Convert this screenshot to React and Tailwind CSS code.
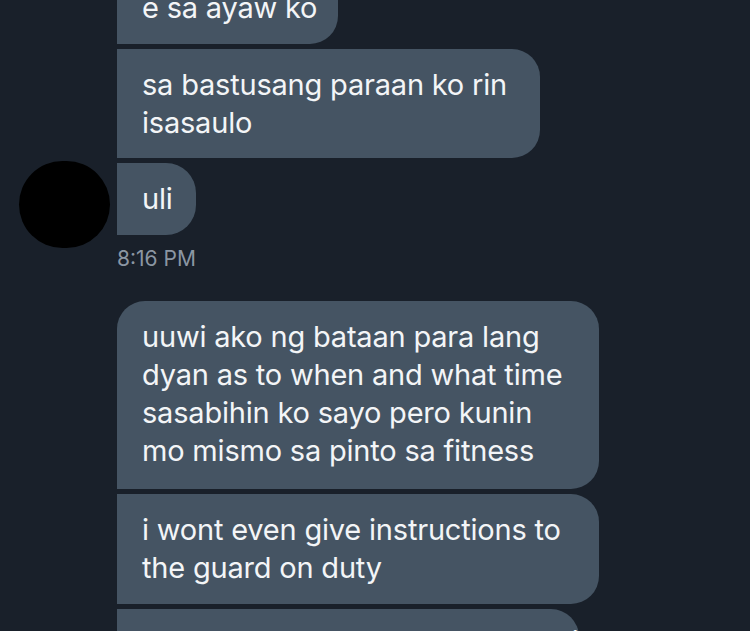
import React from "react";

const font = { fontFamily: '"Inter", "Liberation Sans", sans-serif' };

function Bubble({ className = "", children }) {
  return (
    <div
      className={`bg-[#455463] text-[#f3f5f7] text-[29px] leading-[38px] tracking-[-0.2px] px-[25px] py-[17px] whitespace-nowrap ${className}`}
    >
      {children}
    </div>
  );
}

export default function App() {
  return (
    <div
      className="w-[750px] h-[631px] overflow-hidden bg-[#19202a]"
      style={font}
    >
      <div className="flex">
        <div className="w-[117px] shrink-0 flex items-end justify-start">
          <div className="w-[91px] h-[87px] rounded-full bg-black ml-[19px] mb-[23px]" />
        </div>
        <div className="flex flex-col gap-[5px] mt-[-28px]">
          <Bubble className="w-[221px] h-[72px] rounded-r-[28px]">e sa ayaw ko</Bubble>
          <Bubble className="w-[423px] h-[109px] rounded-r-[28px]">
            sa bastusang paraan ko rin
            <br />
            isasaulo
          </Bubble>
          <Bubble className="w-[79px] h-[72px] rounded-r-[30px]">uli</Bubble>
          <div className="text-[#8b96a3] text-[21px] leading-[24px] pt-[7px]">8:16 PM</div>
        </div>
      </div>
      <div className="flex flex-col gap-[5px] pl-[117px] mt-[30px]">
        <Bubble className="w-[482px] h-[188px] rounded-tl-[28px] rounded-r-[28px]">
          uuwi ako ng bataan para lang
          <br />
          dyan as to when and what time
          <br />
          sasabihin ko sayo pero kunin
          <br />
          mo mismo sa pinto sa fitness
        </Bubble>
        <Bubble className="w-[482px] h-[110px] rounded-r-[28px]">
          i wont even give instructions to
          <br />
          the guard on duty
        </Bubble>
        <Bubble className="w-[462px] h-[110px] rounded-r-[28px] pt-[14px]">
          so wag na wag ka mag kakamali
        </Bubble>
      </div>
    </div>
  );
}
